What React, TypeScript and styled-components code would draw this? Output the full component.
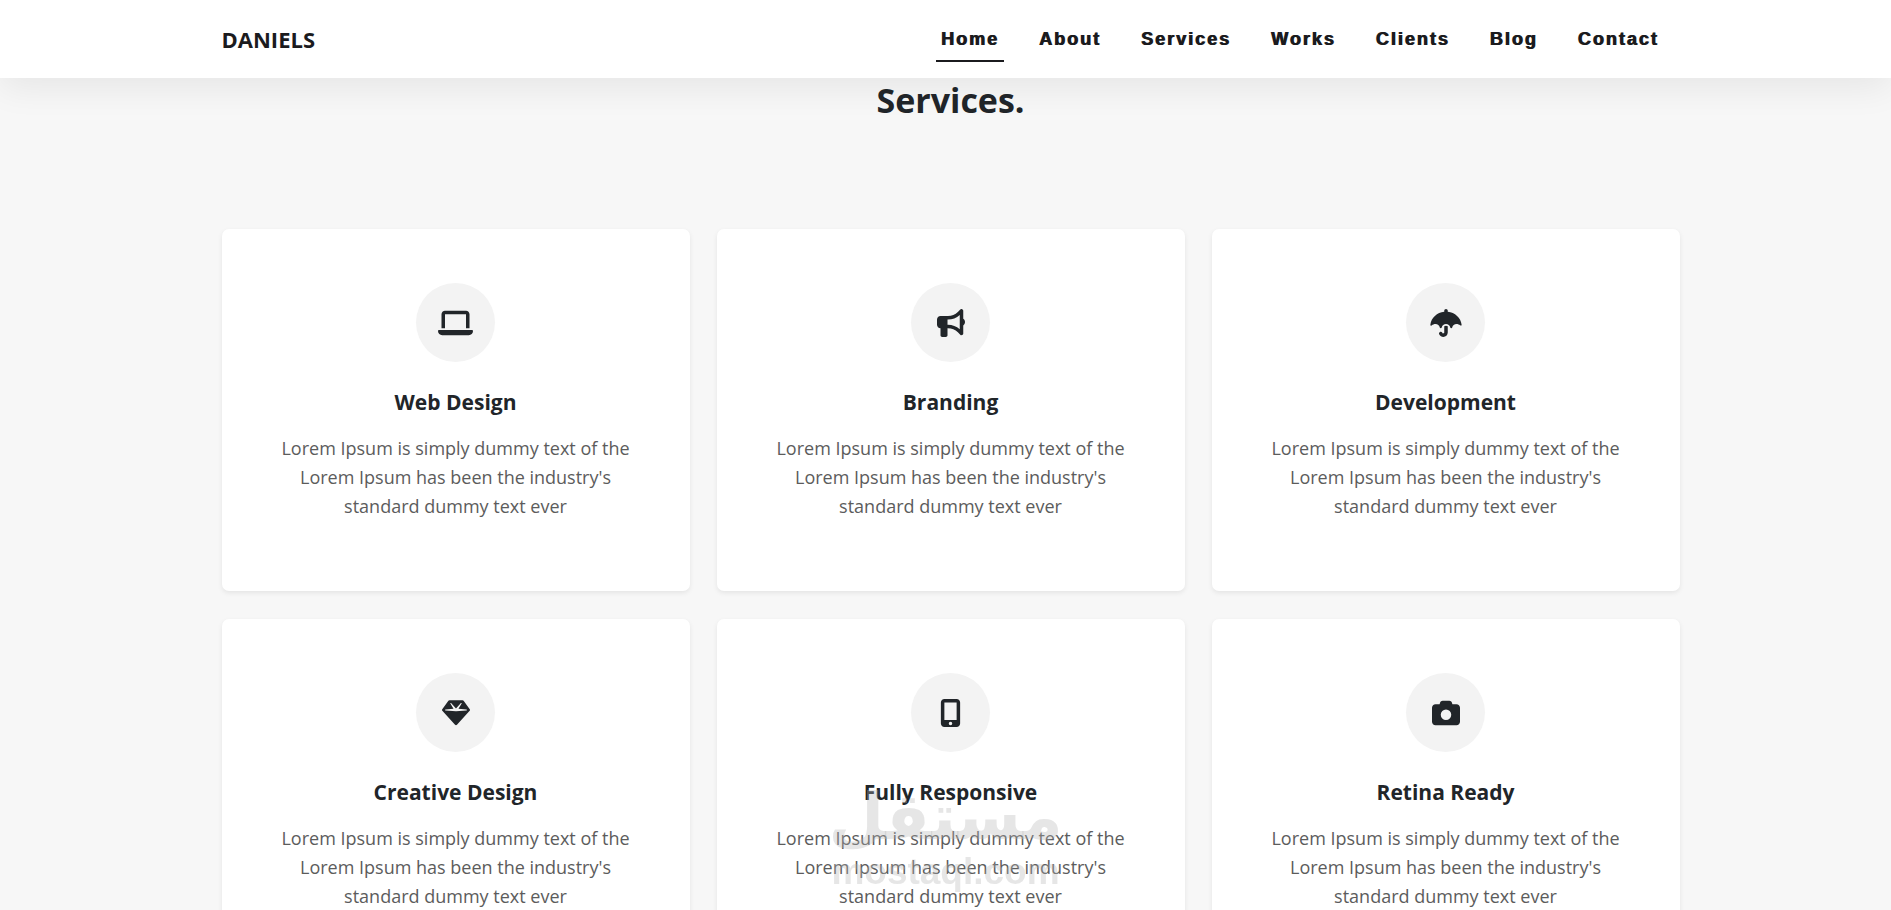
import React from "react";
import styled, { createGlobalStyle } from "styled-components";
import type { IconType } from "react-icons";
import {
  FaLaptop,
  FaBullhorn,
  FaUmbrella,
  FaGem,
  FaMobileScreenButton,
  FaCamera,
} from "react-icons/fa6";

const GlobalStyle = createGlobalStyle`
  *, *::before, *::after { box-sizing: border-box; }
  body {
    margin: 0;
    background: #f7f7f7;
    color: #212529;
    font-family: "Segoe UI", "Open Sans", "Noto Sans", sans-serif;
    font-size: 18px;
  }
`;

const Container = styled.div`
  width: 100%;
  max-width: 1480px;
  margin: 0 auto;
  padding: 0 11px;
`;

const Page = styled.div`
  padding-left: 10px;
`;

const Header = styled.header`
  position: sticky;
  top: 0;
  z-index: 10;
  padding-left: 10px;
  background: #ffffff;
  box-shadow: 0 10px 35px rgba(0, 0, 0, 0.07);
`;

const HeaderRow = styled(Container)`
  display: flex;
  align-items: center;
  justify-content: space-between;
  height: 78px;
`;

const Brand = styled.a`
  color: #1b1b1e;
  font-size: 22px;
  font-weight: 700;
  line-height: 26px;
  text-decoration: none;
`;

const NavList = styled.ul`
  display: flex;
  gap: 30px;
  margin: 0;
  padding: 0 16px 0 0;
  list-style: none;
`;

const NavLink = styled.a<{ $active?: boolean }>`
  display: block;
  padding: 13px 5px 11px;
  border-bottom: 2px solid ${(p) => (p.$active ? "#1b1b1e" : "transparent")};
  color: #1b1b1e;
  font-family: "Liberation Sans", Arial, sans-serif;
  font-size: 18px;
  font-weight: 700;
  line-height: 20px;
  letter-spacing: 2px;
  text-decoration: none;
  text-shadow: 1px 0 0 currentColor;
`;

const SectionTitle = styled.h2`
  margin: 0;
  padding: 0 0 107px;
  font-size: 34px;
  font-weight: 700;
  line-height: 44px;
  text-align: center;
`;

const Grid = styled.div`
  display: grid;
  grid-template-columns: repeat(3, minmax(0, 1fr));
  gap: 28px 27px;
  padding-bottom: 100px;
`;

const Card = styled.article`
  display: flex;
  flex-direction: column;
  align-items: center;
  padding: 54px 50px 70px;
  border-radius: 7px;
  background: #ffffff;
  box-shadow: 0 2px 5px rgba(0, 0, 0, 0.08);
  text-align: center;
`;

const IconCircle = styled.div<{ $iconWidth: number }>`
  display: flex;
  align-items: center;
  justify-content: center;
  width: 79px;
  height: 79px;
  border-radius: 50%;
  background: #f3f3f3;

  svg {
    width: ${(p) => p.$iconWidth}px;
    height: 28px;
  }
`;

const CardTitle = styled.h3`
  margin: 26px 0 18px;
  font-size: 21px;
  font-weight: 700;
  line-height: 28px;
`;

const CardText = styled.p`
  max-width: 360px;
  margin: 0;
  color: #5c5c5c;
  font-weight: 400;
  line-height: 29px;
`;

const Watermark = styled.div`
  position: fixed;
  bottom: 0;
  left: 50%;
  z-index: 20;
  display: flex;
  flex-direction: column;
  align-items: center;
  height: 126px;
  transform: translateX(-50%);
  color: rgba(178, 178, 178, 0.33);
  font-weight: 700;
  pointer-events: none;
`;

const WatermarkArabic = styled.span`
  font-family: "DejaVu Sans", sans-serif;
  font-size: 64px;
  line-height: 66px;
`;

const WatermarkLatin = styled.span`
  font-family: "Liberation Sans", Arial, sans-serif;
  font-size: 37px;
  line-height: 44px;
`;

const links = ["Home", "About", "Services", "Works", "Clients", "Blog", "Contact"];

const services: { title: string; Icon: IconType; iconWidth: number }[] = [
  { title: "Web Design", Icon: FaLaptop, iconWidth: 35 },
  { title: "Branding", Icon: FaBullhorn, iconWidth: 28 },
  { title: "Development", Icon: FaUmbrella, iconWidth: 32 },
  { title: "Creative Design", Icon: FaGem, iconWidth: 28 },
  { title: "Fully Responsive", Icon: FaMobileScreenButton, iconWidth: 21 },
  { title: "Retina Ready", Icon: FaCamera, iconWidth: 28 },
];

export default function App() {
  return (
    <>
      <GlobalStyle />
      <Header>
        <HeaderRow>
          <Brand href="#home">DANIELS</Brand>
          <nav>
            <NavList>
              {links.map((label) => (
                <li key={label}>
                  <NavLink href={`#${label.toLowerCase()}`} $active={label === "Home"}>
                    {label}
                  </NavLink>
                </li>
              ))}
            </NavList>
          </nav>
        </HeaderRow>
      </Header>
      <Page as="main">
        <Container as="section" id="services">
          <SectionTitle>Services.</SectionTitle>
          <Grid>
            {services.map(({ title, Icon, iconWidth }) => (
              <Card key={title}>
                <IconCircle $iconWidth={iconWidth}>
                  <Icon aria-hidden />
                </IconCircle>
                <CardTitle>{title}</CardTitle>
                <CardText>
                  Lorem Ipsum is simply dummy text of the Lorem Ipsum has been the industry's
                  standard dummy text ever
                </CardText>
              </Card>
            ))}
          </Grid>
        </Container>
      </Page>
      <Watermark>
        <WatermarkArabic lang="ar" dir="rtl">مستقل</WatermarkArabic>
        <WatermarkLatin>mostaql.com</WatermarkLatin>
      </Watermark>
    </>
  );
}
